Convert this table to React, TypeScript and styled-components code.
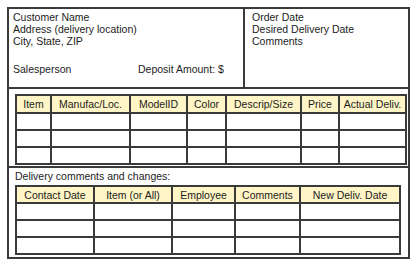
import React from "react";
import styled, { createGlobalStyle } from "styled-components";

const Global = createGlobalStyle`
  html, body { margin: 0; padding: 0; background: #ffffff; }
  body { font-family: "Liberation Sans", Arial, sans-serif; color: #1c1c1c; }
`;

const Page = styled.div`
  padding: 7px 0 0 7px;
`;

const Form = styled.div`
  width: 399px;
  height: 248px;
  border: 2px solid #3a3a3a;
  display: flex;
  flex-direction: column;
  font-size: 10.5px;
  line-height: 12px;
`;

const TopSection = styled.div`
  display: grid;
  grid-template-columns: 236px 1fr;
  height: 78px;
  border-bottom: 2px solid #3a3a3a;
`;

const InfoBlock = styled.div<{ $pad: number; $divider?: boolean }>`
  padding: 2px 0 0 ${(p) => p.$pad}px;
  border-right: ${(p) => (p.$divider ? "2px solid #3a3a3a" : "none")};
  display: flex;
  flex-direction: column;
`;

const Line = styled.div``;

const SalesRow = styled.div`
  display: grid;
  grid-template-columns: 125px auto;
  margin-top: 16px;
`;

const ItemsSection = styled.div`
  padding: 5px 0 1px 6px;
  border-bottom: 2px solid #3a3a3a;
`;

const ChangesSection = styled.div`
  padding: 2px 0 0 6px;
`;

const Caption = styled.div`
  height: 15px;
`;

const Grid = styled.div<{ $cols: string; $first: number }>`
  display: inline-grid;
  grid-template-columns: ${(p) => p.$cols};
  grid-template-rows: ${(p) => p.$first}px repeat(3, 15px);
  gap: 2px;
  padding: 2px;
  background: #3a3a3a;
`;

const HeadCell = styled.div`
  background: #fff5c6;
  display: flex;
  align-items: center;
  justify-content: center;
  white-space: nowrap;
  color: #1c1c1c;
`;

const Cell = styled.div`
  background: #ffffff;
`;

type TableProps = { headers: string[]; cols: string; first: number };

function FormTable({ headers, cols, first }: TableProps) {
  const rows = [0, 1, 2];
  return (
    <Grid $cols={cols} $first={first}>
      {headers.map((h) => (
        <HeadCell key={h}>{h}</HeadCell>
      ))}
      {rows.map((r) =>
        headers.map((h) => <Cell key={`${r}-${h}`} />)
      )}
    </Grid>
  );
}

export default function App() {
  return (
    <>
      <Global />
      <Page>
        <Form>
          <TopSection>
            <InfoBlock $pad={4} $divider>
              <Line>Customer Name</Line>
              <Line>Address (delivery location)</Line>
              <Line>City, State, ZIP</Line>
              <SalesRow>
                <span>Salesperson</span>
                <span>Deposit Amount: $</span>
              </SalesRow>
            </InfoBlock>
            <InfoBlock $pad={7}>
              <Line>Order Date</Line>
              <Line>Desired Delivery Date</Line>
              <Line>Comments</Line>
            </InfoBlock>
          </TopSection>
          <ItemsSection>
            <FormTable
              headers={[
                "Item",
                "Manufac/Loc.",
                "ModelID",
                "Color",
                "Descrip/Size",
                "Price",
                "Actual Deliv.",
              ]}
              cols="33px 77px 55px 37px 73px 36px 65px"
              first={16}
            />
          </ItemsSection>
          <ChangesSection>
            <Caption>Delivery comments and changes:</Caption>
            <FormTable
              headers={[
                "Contact Date",
                "Item (or All)",
                "Employee",
                "Comments",
                "New Deliv. Date",
              ]}
              cols="76px 76px 61px 63px 98px"
              first={15}
            />
          </ChangesSection>
        </Form>
      </Page>
    </>
  );
}
